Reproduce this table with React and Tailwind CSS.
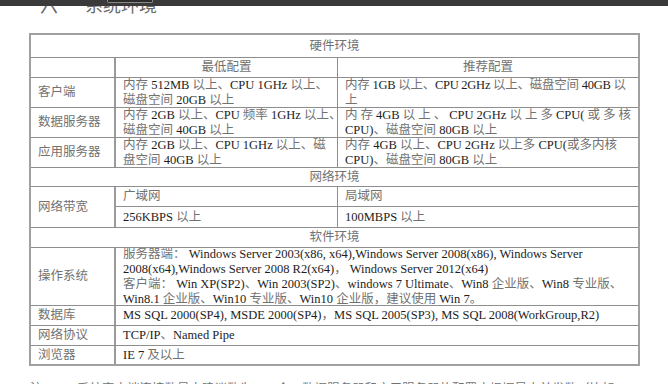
const CJK = /([\u2E80-\u9FFF\u3000-\u303F\uFF00-\uFFEF]+)/;
const TOKEN = /[\u2E80-\u9FFF\u3000-\u303F\uFF00-\uFFEF]|[^\s\u2E80-\u9FFF\u3000-\u303F\uFF00-\uFFEF]+/g;

// CJK glyphs render lighter than the latin runs in the source PDF
function T({ text }) {
  return String(text)
    .split(CJK)
    .map((part, i) =>
      part === "" ? null : i % 2 === 1 ? (
        <span key={i} className="text-[#727272]">{part}</span>
      ) : (
        <span key={i} className="text-[#1d1d1d]">{part}</span>
      )
    );
}

function Line({ text, spread, tight }) {
  if (spread) {
    const tokens = text.match(TOKEN) || [];
    return (
      <div className="flex justify-between whitespace-nowrap">
        {tokens.map((t, i) => (
          <span key={i}>
            <T text={t} />
          </span>
        ))}
      </div>
    );
  }
  return (
    <div className={`whitespace-pre ${tight ? "tracking-[-0.25px]" : ""}`}>
      <T text={text} />
    </div>
  );
}

function Lines({ lines, className = "" }) {
  return (
    <div className={`flex flex-col justify-center px-[7px] overflow-hidden ${className}`}>
      {lines.map((l, i) =>
        typeof l === "string" ? <Line key={i} text={l} /> : <Line key={i} text={l.t} spread={l.spread} tight={l.tight} />
      )}
    </div>
  );
}

function Title({ text, h }) {
  return (
    <div className={`flex items-center justify-center ${h} border-b border-[#8e8e8e]`}>
      <T text={text} />
    </div>
  );
}

function Row({ h, label, mid, right, last }) {
  return (
    <div className={`flex ${h} ${last ? "" : "border-b border-[#8e8e8e]"}`}>
      <div className="w-[85px] shrink-0 flex items-center px-[7px] border-r-2 border-[#9a9a9a]">
        <T text={label} />
      </div>
      {right ? (
        <>
          <Lines lines={mid} className="w-[222px] shrink-0 border-r border-[#8e8e8e]" />
          <Lines lines={right} className="flex-1" />
        </>
      ) : (
        <Lines lines={mid} className="flex-1" />
      )}
    </div>
  );
}

export default function App() {
  return (
    <div className="w-[668px] h-[384px] overflow-hidden bg-white text-[12.5px] leading-[15px] font-['Liberation_Serif','Noto_Sans_CJK_SC',serif]">
      {/* viewer toolbar edge */}
      <div className="h-[6px] bg-[#3a3a3a] flex items-start">
        <div className="ml-[107px] w-[46px] h-[3px] border border-t-0 border-[#8a8a8a] rounded-b-[2px] bg-[#2c2c2c]" />
      </div>

      <div className="h-[27px] overflow-hidden pl-[40px]">
        <div className="-mt-[9px] flex text-[18px] leading-[18px] text-[#6a6a6a]">
          <span>六</span>
          <span className="ml-[27px]">系统环境</span>
        </div>
      </div>

      <div className="ml-[29px] w-[611px] border-2 border-[#a0a0a0]">
        <Title text="硬件环境" h="h-[23px]" />
        <div className="flex h-[20px] border-b border-[#8e8e8e]">
          <div className="w-[85px] shrink-0 border-r-2 border-[#9a9a9a]" />
          <div className="w-[222px] shrink-0 border-r border-[#8e8e8e] flex items-center justify-center">
            <T text="最低配置" />
          </div>
          <div className="flex-1 flex items-center justify-center">
            <T text="推荐配置" />
          </div>
        </div>
        <Row
          h="h-[30px]"
          label="客户端"
          mid={["内存 512MB 以上、CPU 1GHz 以上、", "磁盘空间 20GB 以上"]}
          right={[{ t: "内存 1GB 以上、CPU 2GHz 以上、磁盘空间 40GB 以", tight: true }, "上"]}
        />
        <Row
          h="h-[30px]"
          label="数据服务器"
          mid={["内存 2GB 以上、CPU 频率 1GHz 以上、", "磁盘空间 40GB 以上"]}
          right={[{ t: "内存 4GB 以上、CPU 2GHz 以上多 CPU(或多核", spread: true }, "CPU)、磁盘空间 80GB 以上"]}
        />
        <Row
          h="h-[30px]"
          label="应用服务器"
          mid={["内存 2GB 以上、CPU 1GHz 以上、磁", "盘空间 40GB 以上"]}
          right={["内存 4GB 以上、CPU 2GHz 以上多 CPU(或多内核", "CPU)、磁盘空间 80GB 以上"]}
        />
        <Title text="网络环境" h="h-[19px]" />
        <div className="flex h-[41px] border-b border-[#8e8e8e]">
          <div className="w-[85px] shrink-0 flex items-center px-[7px] border-r-2 border-[#9a9a9a]">
            <T text="网络带宽" />
          </div>
          <div className="flex-1 flex flex-col">
            <div className="flex h-[20px] border-b border-[#8e8e8e]">
              <Lines lines={["广域网"]} className="w-[222px] shrink-0 border-r border-[#8e8e8e]" />
              <Lines lines={["局域网"]} className="flex-1" />
            </div>
            <div className="flex flex-1">
              <Lines lines={["256KBPS 以上"]} className="w-[222px] shrink-0 border-r border-[#8e8e8e]" />
              <Lines lines={["100MBPS 以上"]} className="flex-1" />
            </div>
          </div>
        </div>
        <Title text="软件环境" h="h-[20px]" />
        <Row
          h="h-[58px]"
          label="操作系统"
          mid={[
            "服务器端： Windows Server 2003(x86, x64),Windows Server 2008(x86), Windows Server",
            "2008(x64),Windows Server 2008 R2(x64)， Windows Server 2012(x64)",
            "客户端： Win XP(SP2)、Win 2003(SP2)、windows 7 Ultimate、Win8 企业版、Win8 专业版、",
            "Win8.1 企业版、Win10 专业版、Win10 企业版，建议使用 Win 7。",
          ]}
        />
        <Row h="h-[20px]" label="数据库" mid={["MS SQL 2000(SP4), MSDE 2000(SP4)，MS SQL 2005(SP3), MS SQL 2008(WorkGroup,R2)"]} />
        <Row h="h-[20px]" label="网络协议" mid={["TCP/IP、Named Pipe"]} />
        <Row h="h-[18px]" label="浏览器" mid={["IE 7 及以上"]} last />
      </div>

      <div className="mt-[16px] pl-[30px] whitespace-nowrap">
        <T text="注：B/S 系统客户端连接数最大建议数为 100 个，数据服务器和应用服务器的配置应根据最大并发数（比如" />
      </div>
    </div>
  );
}
